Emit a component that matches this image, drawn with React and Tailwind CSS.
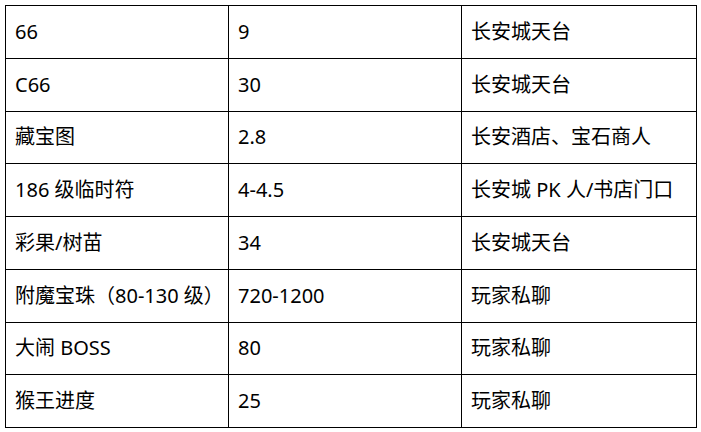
import React from 'react';

const rows = [
  ['66', '9', '长安城天台'],
  ['C66', '30', '长安城天台'],
  ['藏宝图', '2.8', '长安酒店、宝石商人'],
  ['186 级临时符', '4-4.5', '长安城 PK 人/书店门口'],
  ['彩果/树苗', '34', '长安城天台'],
  ['附魔宝珠（80-130 级）', '720-1200', '玩家私聊'],
  ['大闹 BOSS', '80', '玩家私聊'],
  ['猴王进度', '25', '玩家私聊'],
];

const App = () => {
  return (
    <div
      className="w-[701px] h-[432px] bg-white pl-[5px] pt-[5px] text-black"
      style={{ fontFamily: '"Noto Sans", "Noto Sans CJK SC", sans-serif' }}
    >
      <table className="border-collapse w-[691px] table-fixed text-[20px] leading-none">
        <colgroup>
          <col className="w-[223px]" />
          <col className="w-[233px]" />
          <col className="w-[235px]" />
        </colgroup>
        <tbody>
          {rows.map((r, i) => (
            <tr key={i} className="h-[52.75px]">
              {r.map((c, j) => (
                <td key={j} className="border border-black pl-[9px] pr-1 align-middle whitespace-nowrap">
                  {c}
                </td>
              ))}
            </tr>
          ))}
        </tbody>
      </table>
    </div>
  );
};

export default App;
